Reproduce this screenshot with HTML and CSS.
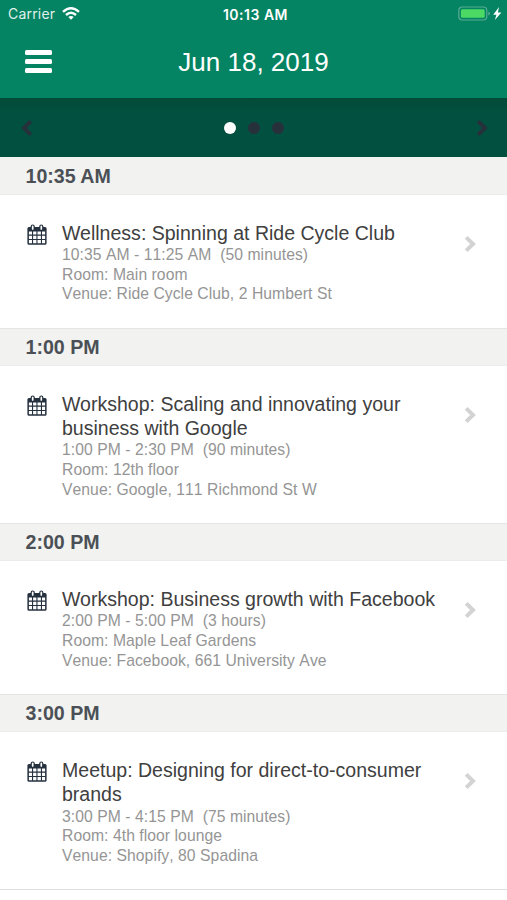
FILE: index.html
```
<!DOCTYPE html>
<html lang="en">
<head>
<meta charset="utf-8">
<title>Schedule</title>
<link rel="stylesheet" href="styles.css">
</head>
<body>
<svg class="defs" aria-hidden="true">
  <symbol id="calendar" viewBox="0 0 20 22">
    <path fill="#25313f" fill-rule="evenodd" d="M2 3H3.600V2.600Q3.600 .4 5.700 .4T7.800 2.600V3H12.200V2.600Q12.200 .4 14.300 .4T16.400 2.600V3H18Q19.600 3 19.600 4.600V19.200Q19.600 20.800 18 20.800H2Q.4 20.800 .4 19.200V4.600Q.4 3 2 3ZM1.900 7.600V10.600H5V7.600ZM6.100 7.600V10.600H9.400V7.600ZM10.500 7.600V10.600H13.900V7.600ZM15 7.600V10.600H18.100V7.600ZM1.900 11.700V15H5V11.700ZM6.100 11.700V15H9.400V11.700ZM10.500 11.700V15H13.900V11.700ZM15 11.700V15H18.100V11.700ZM1.900 16.100V19.300H5V16.100ZM6.100 16.100V19.300H9.400V16.100ZM10.500 16.100V19.300H13.900V16.100ZM15 16.100V19.300H18.100V16.100Z"/>
    <path d="M5.700 2.400V4.900M14.300 2.400V4.900" stroke="#fff" stroke-width="1.700" stroke-linecap="round"/>
  </symbol>
  <symbol id="chevron" viewBox="0 0 12 18">
    <path d="M2.200 2.300L9 9L2.200 15.700" fill="none" stroke="currentColor" stroke-width="4"/>
  </symbol>
</svg>
<header class="top">
  <div class="status">
    <div class="carrier"><span>Carrier</span>
      <svg class="wifi" viewBox="0 0 18 13"><g fill="none" stroke="#fff" stroke-width="2.400"><path d="M1 4.800Q9-2.200 17 4.800"/><path d="M4 8Q9 3.600 14 8"/></g><path d="M6.300 10Q9 7.800 11.700 10L9 12.700Z" fill="#fff"/></svg>
    </div>
    <div class="clock">10:13 AM</div>
    <div class="power">
      <svg viewBox="0 0 44 16" width="44" height="16"><rect x=".8" y="1" width="28" height="13" rx="3.500" fill="none" stroke="#58ac92" stroke-width="1.200"/><rect x="2.900" y="3.200" width="23.800" height="8.600" rx="1.500" fill="#4cd964"/><path d="M30.300 5.500Q32 6 32 7.500T30.300 9.500Z" fill="#58ac92"/><path d="M41 .9L35.200 8.700H38.400L36.900 14.100L43.400 6.400H39.900Z" fill="#fff"/></svg>
    </div>
  </div>
  <div class="nav">
    <div class="menu"><i></i><i></i><i></i></div>
    <h1>Jun 18, 2019</h1>
    <div></div>
  </div>
</header>
<div class="pager">
  <svg class="chev back"><use href="#chevron"/></svg>
  <div class="dots"><i class="on"></i><i></i><i></i></div>
  <svg class="chev"><use href="#chevron"/></svg>
</div>
<main>
  <h2>10:35 AM</h2>
  <article>
    <svg class="cal"><use href="#calendar"/></svg>
    <div class="body"><h3>Wellness: Spinning at Ride Cycle Club</h3>
      <p>10:35 AM - 11:25 AM&nbsp; (50 minutes)</p><p>Room: Main room</p><p>Venue: Ride Cycle Club, 2 Humbert St</p></div>
    <svg class="chev go"><use href="#chevron"/></svg>
  </article>
  <h2>1:00 PM</h2>
  <article class="tall">
    <svg class="cal"><use href="#calendar"/></svg>
    <div class="body"><h3>Workshop: Scaling and innovating your<br>business with Google</h3>
      <p>1:00 PM - 2:30 PM&nbsp; (90 minutes)</p><p>Room: 12th floor</p><p>Venue: Google, 111 Richmond St W</p></div>
    <svg class="chev go"><use href="#chevron"/></svg>
  </article>
  <h2>2:00 PM</h2>
  <article>
    <svg class="cal"><use href="#calendar"/></svg>
    <div class="body"><h3>Workshop: Business growth with Facebook</h3>
      <p>2:00 PM - 5:00 PM&nbsp; (3 hours)</p><p>Room: Maple Leaf Gardens</p><p>Venue: Facebook, 661 University Ave</p></div>
    <svg class="chev go"><use href="#chevron"/></svg>
  </article>
  <h2>3:00 PM</h2>
  <article class="tall last">
    <svg class="cal"><use href="#calendar"/></svg>
    <div class="body"><h3>Meetup: Designing for direct-to-consumer<br>brands</h3>
      <p>3:00 PM - 4:15 PM&nbsp; (75 minutes)</p><p>Room: 4th floor lounge</p><p>Venue: Shopify, 80 Spadina</p></div>
    <svg class="chev go"><use href="#chevron"/></svg>
  </article>
</main>
</body>
</html>
```
FILE: styles.css
```
* { box-sizing: border-box; margin: 0; padding: 0; }
body { width: 507px; height: 900px; overflow: hidden; background: #fff; font-family: "Liberation Sans", Arial, sans-serif; }
.defs { display: none; }
svg { display: block; flex: none; }
.top { height: 98px; background: #048462; color: #fff; }
.status { height: 28px; display: grid; grid-template-columns: 1fr auto 1fr; align-items: center; padding: 0 5px 0 8px; font-family: Inter, sans-serif; font-size: 14px; }
.carrier { display: flex; align-items: center; gap: 7px; letter-spacing: .2px; margin-top: -1px; }
.carrier span { opacity: .88; }
.wifi { width: 18px; height: 13px; }
.clock { font-weight: 600; font-size: 14px; letter-spacing: .5px; margin-left: 1px; }
.power { display: flex; justify-content: flex-end; margin-top: -1px; }
.nav { height: 68px; display: grid; grid-template-columns: 1fr auto 1fr; align-items: center; padding: 0 25px; }
.menu { width: 27px; display: flex; flex-direction: column; gap: 4px; margin-top: -2px; }
.menu i { height: 5px; border-radius: 1.5px; background: #fff; }
h1 { font-size: 26px; font-weight: 400; line-height: 30px; }
.pager { height: 59px; background: linear-gradient(#024a38, #02503f 14px); display: flex; align-items: center; justify-content: space-between; padding: 1px 19px 0 21px; color: #27313b; }
.chev { width: 12px; height: 18px; }
.back { transform: scaleX(-1); }
.dots { display: flex; gap: 12px; margin-right: 2px; }
.dots i { width: 12px; height: 12px; border-radius: 50%; background: #27313b; }
.dots .on { background: #fff; }
h2 { height: 38px; background: #f2f2f0; border-top: 1px solid #e5e5e4; border-bottom: 1px solid #ececeb; padding-left: 25.5px; font-size: 19.6px; line-height: 37px; color: #4b5056; }
main h2:first-child { border-top-color: #f2f2f0; }
article { height: 133px; display: flex; padding: 25.6px 31px 0 27px; }
.tall { height: 157.4px; }
.last { border-bottom: 1px solid #dededf; }
.cal { width: 20px; height: 22px; margin-top: 3px; }
.body { flex: 1; margin-left: 15px; white-space: nowrap; }
h3 { font-size: 19.55px; font-weight: 400; line-height: 24.4px; color: #404040; }
p { font-size: 15.7px; line-height: 19.6px; color: #959595; font-kerning: none; letter-spacing: .06px; }
.go { color: #d3d3d3; margin-top: 14.4px; }
```
